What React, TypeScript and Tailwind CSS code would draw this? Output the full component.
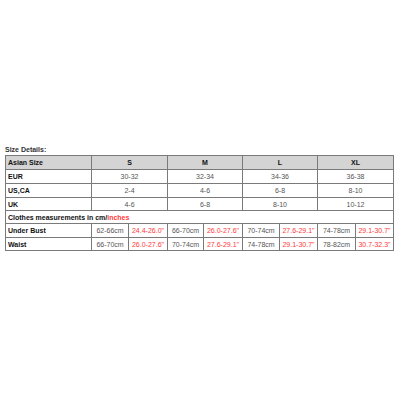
import React from "react";

const cols = [
  { w: "w-[86px]" },
  { w: "w-[76px]" },
  { w: "w-[75px]" },
  { w: "w-[75px]" },
  { w: "w-[76px]" },
];

const sub = [
  ["w-[37px]", "w-[39px]"],
  ["w-[36px]", "w-[39px]"],
  ["w-[37px]", "w-[38px]"],
  ["w-[38px]", "w-[38px]"],
];

function SizeRow({ label, vals, h, header }: { label: string; vals: string[]; h: string; header?: boolean }) {
  return (
    <div className={`flex border-b border-[#7a7a7a] ${h} ${header ? "bg-[#d4d4d4]" : ""}`}>
      <div className={`${cols[0].w} shrink-0 border-r border-[#7a7a7a] flex items-center pl-[2px] font-bold text-[#111]`}>{label}</div>
      {vals.map((v, i) => (
        <div
          key={i}
          className={`${cols[i + 1].w} shrink-0 border-r border-[#7a7a7a] flex items-center justify-center ${header ? "font-bold text-[#111]" : "text-[#555]"}`}
        >
          {v}
        </div>
      ))}
    </div>
  );
}

function MeasRow({ label, vals, h }: { label: string; vals: [string, string][]; h: string }) {
  return (
    <div className={`flex border-b border-[#7a7a7a] ${h}`}>
      <div className={`${cols[0].w} shrink-0 border-r border-[#7a7a7a] flex items-center pl-[2px] font-bold text-[#111]`}>{label}</div>
      {vals.map((v, i) => (
        <React.Fragment key={i}>
          <div className={`${sub[i][0]} shrink-0 border-r border-[#7a7a7a] flex items-center justify-center text-[#555]`}>{v[0]}</div>
          <div className={`${sub[i][1]} shrink-0 border-r border-[#7a7a7a] flex items-center justify-center text-[#ff3b3b]`}>{v[1]}</div>
        </React.Fragment>
      ))}
    </div>
  );
}

export default function App() {
  return (
    <div
      className="w-[400px] h-[400px] bg-white pt-[144px] pl-[5px] text-[7px] leading-none"
      style={{ fontFamily: '"Liberation Sans", Arial, sans-serif' }}
    >
      <div className="font-bold text-[#333] h-[11px] flex items-center">Size Details:</div>
      <div className="w-[389px] border-l border-t border-[#7a7a7a]">
        <SizeRow header label="Asian Size" vals={["S", "M", "L", "XL"]} h="h-[14px]" />
        <SizeRow label="EUR" vals={["30-32", "32-34", "34-36", "36-38"]} h="h-[14px]" />
        <SizeRow label="US,CA" vals={["2-4", "4-6", "6-8", "8-10"]} h="h-[14px]" />
        <SizeRow label="UK" vals={["4-6", "6-8", "8-10", "10-12"]} h="h-[13px]" />
        <div className="flex border-b border-[#7a7a7a] h-[13px]">
          <div className="w-[388px] border-r border-[#7a7a7a] flex items-center pl-[2px] font-bold text-[#111]">
            Clothes measurements in cm/<span className="text-[#ff3b3b]">inches</span>
          </div>
        </div>
        <MeasRow
          label="Under Bust"
          h="h-[14px]"
          vals={[
            ["62-66cm", "24.4-26.0\""],
            ["66-70cm", "26.0-27.6\""],
            ["70-74cm", "27.6-29.1\""],
            ["74-78cm", "29.1-30.7\""],
          ]}
        />
        <MeasRow
          label="Waist"
          h="h-[13px]"
          vals={[
            ["66-70cm", "26.0-27.6\""],
            ["70-74cm", "27.6-29.1\""],
            ["74-78cm", "29.1-30.7\""],
            ["78-82cm", "30.7-32.3\""],
          ]}
        />
      </div>
    </div>
  );
}
